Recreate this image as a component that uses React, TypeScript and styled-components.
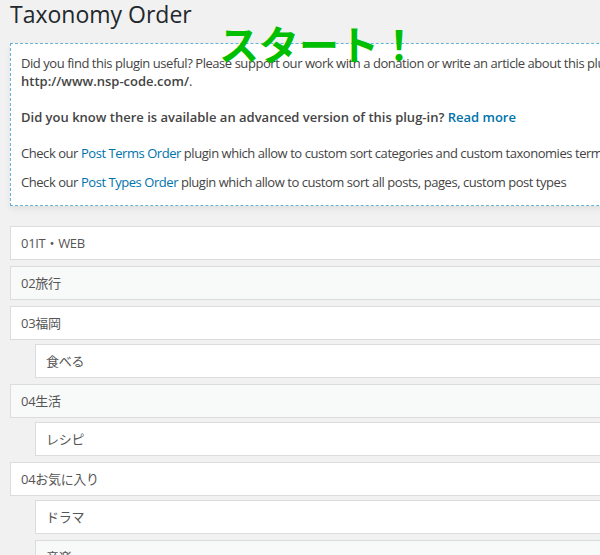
import React from 'react';
import styled, { createGlobalStyle } from 'styled-components';

type Term = {
	name: string;
	shaded?: boolean;
	children?: Term[];
};

const terms: Term[] = [
	{ name: '01IT・WEB' },
	{ name: '02旅行', shaded: true },
	{ name: '03福岡', children: [{ name: '食べる' }] },
	{ name: '04生活', shaded: true, children: [{ name: 'レシピ' }] },
	{
		name: '04お気に入り',
		children: [{ name: 'ドラマ' }, { name: '音楽', shaded: true }],
	},
];

export default function App() {
	return (
		<>
			<GlobalStyle />
			<Page>
				<Title>Taxonomy Order</Title>
				<Notice>
					<NoticeText $gap={0}>
						Did you find this plugin useful? Please support our work with a
						donation or write an article about this plugin in your blog with a
						link to our site
						<br />
						<strong>http://www.nsp-code.com/</strong>.
					</NoticeText>
					<NoticeText $gap={18}>
						<strong>
							Did you know there is available an advanced version of this
							plug-in? <Link href="#">Read more</Link>
						</strong>
					</NoticeText>
					<NoticeText $gap={18}>
						Check our <Link href="#">Post Terms Order</Link> plugin which allow
						to custom sort categories and custom taxonomies terms
					</NoticeText>
					<NoticeText $gap={11}>
						Check our <Link href="#">Post Types Order</Link> plugin which allow
						to custom sort all posts, pages, custom post types
					</NoticeText>
				</Notice>
				<TermTree items={terms} />
				<Stamp>スタート！</Stamp>
			</Page>
		</>
	);
}

function TermTree(props: { items: Term[]; nested?: boolean }) {
	const { items, nested } = props;
	const List = nested ? SubList : TermList;

	return (
		<List>
			{items.map((term) => (
				<li key={term.name}>
					<TermRow $shaded={!!term.shaded}>{term.name}</TermRow>
					{term.children && <TermTree items={term.children} nested />}
				</li>
			))}
		</List>
	);
}

const GlobalStyle = createGlobalStyle`
	html, body {
		margin: 0;
		padding: 0;
		overflow: hidden;
		background: #f1f1f1;
	}
	body {
		font-family: 'Open Sans', 'Noto Sans CJK JP', sans-serif;
		color: #444;
	}
`;

const Page = styled.div`
	position: relative;
	width: 1000px;
	padding: 0 10px;
`;

const Title = styled.h1`
	margin: 0 0 14px;
	font-size: 23px;
	font-weight: 400;
	line-height: 29px;
	color: #23282d;
`;

const Notice = styled.div`
	background: #fff;
	border: 1px dashed #65b4d4;
	padding: 10px 10px 14px;
	box-shadow: 0 3px 6px rgba(0, 0, 0, 0.07);
`;

const NoticeText = styled.p<{ $gap: number }>`
	margin: ${(p) => p.$gap}px 0 0;
	font-size: 13px;
	line-height: 18px;
	letter-spacing: -0.45px;
	color: #444;

	strong {
		font-weight: 600;
		letter-spacing: 0;
	}
`;

const Link = styled.a`
	color: #0073aa;
	text-decoration: none;
`;

const TermList = styled.ul`
	display: flex;
	flex-direction: column;
	gap: 6px;
	margin: 20px 0 0;
	padding: 0;
	list-style: none;
`;

const SubList = styled(TermList)`
	margin-top: 4px;
	padding-left: 25px;
`;

const TermRow = styled.div<{ $shaded: boolean }>`
	height: 32px;
	line-height: 32px;
	padding: 0 10px;
	border: 1px solid #dcdcdc;
	background: ${(p) => (p.$shaded ? '#f8f9f9' : '#fff')};
	font-size: 13px;
	letter-spacing: -0.3px;
	color: #555;
`;

const Stamp = styled.div`
	position: absolute;
	left: 219px;
	top: 23px;
	font-family: 'Noto Sans CJK JP', sans-serif;
	font-size: 40px;
	font-weight: 700;
	line-height: 40px;
	color: #00bf00;
	white-space: nowrap;
`;
